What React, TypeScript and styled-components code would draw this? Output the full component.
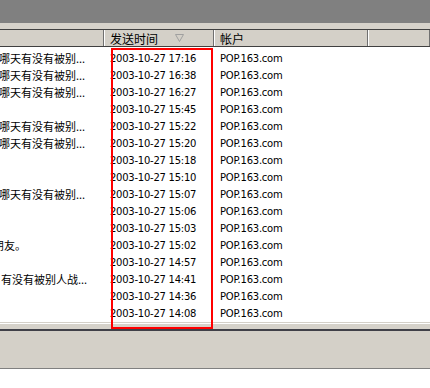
import React from 'react';
import styled, { createGlobalStyle } from 'styled-components';

const Global = createGlobalStyle`
  html, body { margin: 0; padding: 0; background: #ffffff; }
  #root { width: 430px; height: 388px; }
`;

const COLS = '104px 110px 154px 1fr';

const Window = styled.div`
  position: relative;
  width: 430px;
  height: 388px;
  overflow: hidden;
  display: flex;
  flex-direction: column;
  background: #ffffff;
`;

const TopBar = styled.div`
  height: 23px;
  background: #808080;
  flex: none;
`;

const Band = styled.div`
  height: 6px;
  background: #d6d2ca;
  flex: none;
`;

const HeaderRow = styled.div`
  display: grid;
  grid-template-columns: ${COLS};
  height: 16px;
  border-top: 1px solid #404040;
  border-bottom: 1px solid #404040;
  background: #d4d0c8;
  flex: none;
`;

const HeaderCell = styled.div<{ $first?: boolean }>`
  display: flex;
  align-items: center;
  box-sizing: border-box;
  padding-left: 5px;
  border-left: ${(p) => (p.$first ? 'none' : '1px solid #ffffff')};
  border-right: 1px solid #707070;
  font-family: 'Noto Sans CJK SC', sans-serif;
  font-size: 12px;
  color: #000000;
  overflow: hidden;
  white-space: nowrap;
`;

const SortArrow = styled.svg`
  margin-left: 17px;
  flex: none;
`;

const Body = styled.div`
  padding-top: 3px;
  display: flex;
  flex-direction: column;
  flex: none;
`;

const Row = styled.div`
  display: grid;
  grid-template-columns: ${COLS};
  height: 17px;
`;

const SubjectCell = styled.div`
  overflow: hidden;
  white-space: nowrap;
  font-family: 'Noto Sans CJK SC', sans-serif;
  font-size: 11px;
  line-height: 17px;
  color: #000000;
`;

const Shifted = styled.span<{ $off: number }>`
  display: inline-block;
  margin-left: ${(p) => p.$off}px;
`;

const TextCell = styled.div`
  padding-left: 6px;
  overflow: hidden;
  white-space: nowrap;
  font-family: 'DejaVu Sans', sans-serif;
  font-size: 10px;
  letter-spacing: -0.25px;
  line-height: 17px;
  color: #000000;
`;

const ScrollEdge = styled.div`
  height: 7px;
  box-sizing: border-box;
  border-top: 1px solid #d4d0c8;
  background: #d6d2ca;
  box-shadow: inset 0 1px 0 #ffffff;
  flex: none;
`;

const Divider = styled.div`
  height: 2px;
  background: #404048;
  flex: none;
`;

const Panel = styled.div`
  height: 37px;
  background: #d4d0c8;
  border-bottom: 1px solid #808080;
  flex: none;
`;

const Rest = styled.div`
  flex: 1;
  background: #ffffff;
`;

const Highlight = styled.div`
  position: absolute;
  left: 111px;
  top: 48px;
  width: 102px;
  height: 281px;
  box-sizing: border-box;
  border: 2px solid #ff0000;
  pointer-events: none;
`;

const S = '哪天有没有被别...';

const rows: { s: string; off: number; t: string }[] = [
  { s: S, off: -1, t: '2003-10-27 17:16' },
  { s: S, off: -1, t: '2003-10-27 16:38' },
  { s: S, off: -1, t: '2003-10-27 16:27' },
  { s: '', off: 0, t: '2003-10-27 15:45' },
  { s: S, off: -1, t: '2003-10-27 15:22' },
  { s: S, off: -1, t: '2003-10-27 15:20' },
  { s: '', off: 0, t: '2003-10-27 15:18' },
  { s: '', off: 0, t: '2003-10-27 15:10' },
  { s: S, off: -1, t: '2003-10-27 15:07' },
  { s: '', off: 0, t: '2003-10-27 15:06' },
  { s: '', off: 0, t: '2003-10-27 15:03' },
  { s: '朋友。', off: -7, t: '2003-10-27 15:02' },
  { s: '', off: 0, t: '2003-10-27 14:57' },
  { s: '有没有被别人战...', off: 1, t: '2003-10-27 14:41' },
  { s: '', off: 0, t: '2003-10-27 14:36' },
  { s: '', off: 0, t: '2003-10-27 14:08' },
];

export default function App() {
  return (
    <>
      <Global />
      <Window>
        <TopBar />
        <Band />
        <HeaderRow>
          <HeaderCell $first />
          <HeaderCell>
            发送时间
            <SortArrow width="9" height="8" viewBox="0 0 9 8">
              <path d="M0.5 0.5 H8.5 L4.5 7.5 Z" fill="none" stroke="#a0a0a0" strokeWidth="1" />
            </SortArrow>
          </HeaderCell>
          <HeaderCell>帐户</HeaderCell>
          <HeaderCell />
        </HeaderRow>
        <Body>
          {rows.map((r, i) => (
            <Row key={i}>
              <SubjectCell>
                <Shifted $off={r.off}>{r.s}</Shifted>
              </SubjectCell>
              <TextCell>{r.t}</TextCell>
              <TextCell>POP.163.com</TextCell>
              <TextCell />
            </Row>
          ))}
        </Body>
        <ScrollEdge />
        <Divider />
        <Panel />
        <Rest />
        <Highlight />
      </Window>
    </>
  );
}
